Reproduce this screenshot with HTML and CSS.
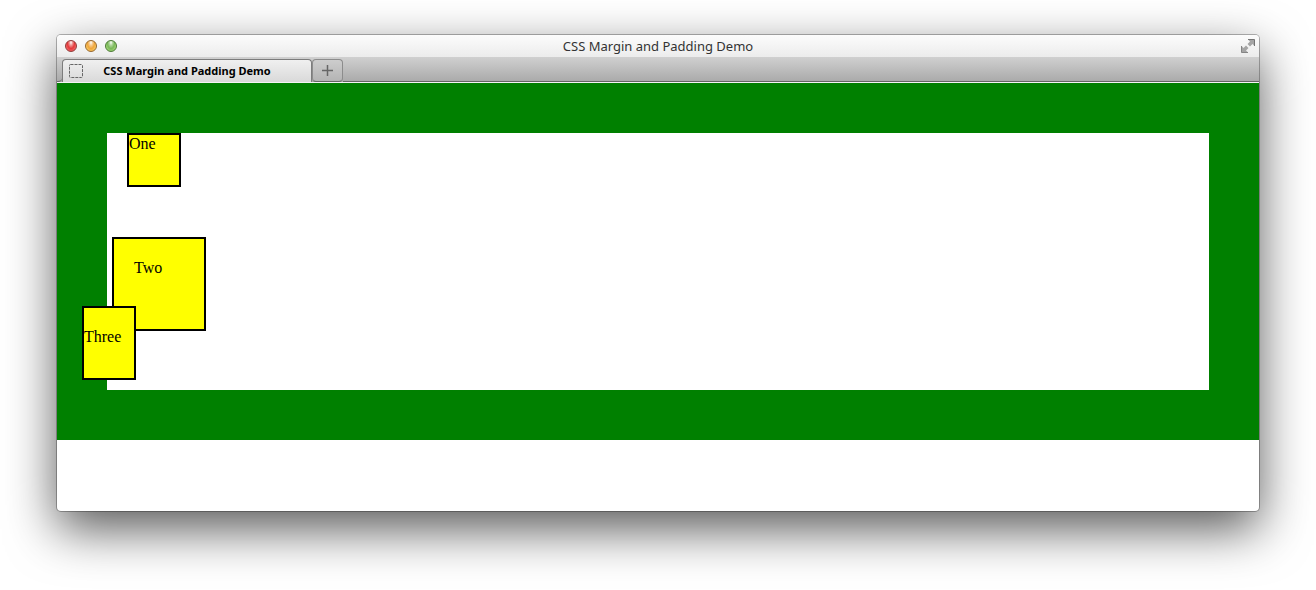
FILE: index.html
```html
<!DOCTYPE html>
<html lang="en">
<head>
<meta charset="utf-8">
<title>CSS Margin and Padding Demo</title>
<link rel="stylesheet" href="styles.css">
</head>
<body>
<main class="window">
  <header class="titlebar">
    <div class="lights">
      <button class="light light-close" aria-label="Close"></button>
      <button class="light light-minimize" aria-label="Minimize"></button>
      <button class="light light-zoom" aria-label="Zoom"></button>
    </div>
    <h1 class="title">CSS Margin and Padding Demo</h1>
    <button class="fullscreen" aria-label="Enter full screen">
      <svg width="14" height="14" viewBox="0 0 14 14"><path d="M7 .5h6.500v6.500l-2-2-2.500 2.500-2.500-2.500 2.500-2.500z" fill="#a5a5a5"/><path d="M7 .5h6.500v6.500" fill="none" stroke="#747474"/><path d="M.5 7l2 2 2.500-2.500 2.500 2.500-2.500 2.500 2 2h-6.500z" fill="#a5a5a5"/><path d="M.5 7v6.500h6.500" fill="none" stroke="#858585"/></svg>
    </button>
  </header>
  <nav class="tabs">
    <span class="foot"></span>
    <button class="tab">
      <svg class="favicon" width="14" height="14" viewBox="0 0 14 14"><rect x=".5" y=".5" width="13" height="13" rx="1" fill="none" stroke="#666" stroke-dasharray="3 1"/></svg>
      <span class="tab-label">CSS Margin and Padding Demo</span>
    </button>
    <button class="new-tab" aria-label="New tab">
      <svg width="11" height="11" viewBox="0 0 11 11"><path d="M5.500 0v11M0 5.500h11" stroke="#666" stroke-width="1.500"/></svg>
    </button>
    <span class="strip"></span>
  </nav>
  <section class="page">
    <div class="demo">
      <div class="box box-one">One</div>
      <div class="box box-two">Two</div>
      <div class="box box-three">Three</div>
    </div>
  </section>
</main>
</body>
</html>
```
FILE: styles.css
```css
* {
  box-sizing: border-box;
}

body {
  margin: 0;
  padding: 35px 57px 79px;
  background: #fff;
}

button {
  margin: 0;
  padding: 0;
  border: 0;
  background: none;
}

svg {
  display: block;
}

.window {
  overflow: hidden;
  border-radius: 4px;
  background: #fff;
  box-shadow: 0 0 0 1px rgba(0, 0, 0, 0.28), 0 18px 50px rgba(0, 0, 0, 0.66);
}

.titlebar {
  display: grid;
  grid-template-columns: 1fr auto 1fr;
  align-items: center;
  height: 22px;
  padding: 0 4px;
  background: linear-gradient(#fcfcfc, #ececec);
}

.lights {
  display: flex;
  gap: 8px;
  padding-left: 4px;
}

.light {
  width: 12px;
  height: 12px;
  border: 1px solid;
  border-radius: 50%;
}

.light-close {
  border-color: #8f3a38;
  background: radial-gradient(ellipse at 50% 15%, #fff 0, #f09a98 22%, #e4383a 50%, #f88 100%);
}

.light-minimize {
  border-color: #96662c;
  background: radial-gradient(ellipse at 50% 15%, #fff 0, #f8cf96 22%, #f0a53a 50%, #ffe680 100%);
}

.light-zoom {
  border-color: #4b7a35;
  background: radial-gradient(ellipse at 50% 15%, #fff 0, #b4d8a0 22%, #79b858 50%, #c4f090 100%);
}

.title {
  margin: 0;
  color: #333;
  font: 400 13px/22px "Noto Sans", "Open Sans", sans-serif;
}

.fullscreen {
  justify-self: end;
}

.tabs {
  display: flex;
  height: 26px;
  border-bottom: 1px solid #f4f4f4;
  background: linear-gradient(#d0d0d0, #a9a9a9);
}

.foot {
  width: 5px;
  margin-top: 4px;
  border-bottom: 1px solid #666;
  border-bottom-right-radius: 4px;
}

.tab {
  display: grid;
  grid-template-columns: 14px 1fr 14px;
  align-items: center;
  width: 250px;
  margin-top: 2px;
  padding: 0 6px;
  border: 1px solid #7c7c7c;
  border-bottom: 0;
  border-radius: 4px 4px 0 0;
  background: linear-gradient(#f0f0f0, #d9d9d9);
}

.tab-label {
  color: #000;
  font: 700 11px/20px "Noto Sans", "Open Sans", sans-serif;
  white-space: nowrap;
}

.new-tab {
  display: grid;
  place-items: center;
  width: 31px;
  border: 1px solid #8c8c8c;
  border-bottom-color: #666;
  border-radius: 4px;
  margin-top: 2px;
  background: linear-gradient(#cdcdcd, #b4b4b4);
}

.strip {
  flex: 1;
  border-bottom: 1px solid #666;
}

.page {
  padding-bottom: 71px;
}

.demo {
  display: flow-root;
  border: 50px solid #008000;
  color: #000;
  font: 16px/18px "Liberation Serif", "Times New Roman", serif;
}

.box {
  box-sizing: content-box;
  width: 50px;
  height: 50px;
  border: 2px solid #000;
  background: #ff0;
}

.box-one {
  margin: 0 0 50px 20px;
}

.box-two {
  margin-left: 5px;
  padding: 20px;
}

.box-three {
  position: relative;
  height: 30px;
  margin: -25px 0 10px -25px;
  padding: 20px 0;
}
```
